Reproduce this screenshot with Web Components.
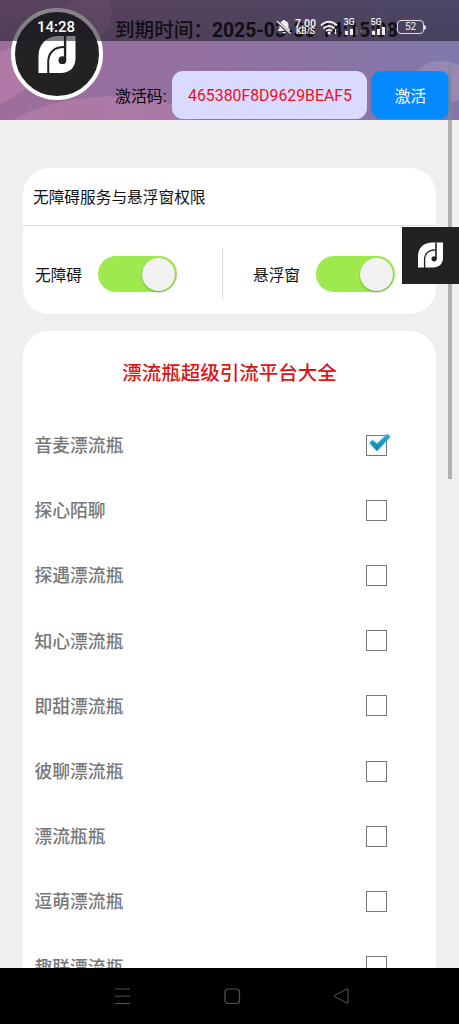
<!DOCTYPE html>
<html lang="zh"><head><meta charset="utf-8"><title>漂流瓶</title>
<style>html,body{margin:0;height:100%;overflow:hidden;background:#efefef}</style></head>
<body><bottle-app></bottle-app>
<script>
const define=(name,html)=>customElements.define(name,class extends HTMLElement{
  constructor(){super();const t=document.createElement('template');t.innerHTML=html;this.attachShadow({mode:'open'}).append(t.content.cloneNode(true));}
});
define('brand-logo',`<style>:host{display:block}svg{display:block;width:100%;height:100%}</style>
<svg viewBox="0 0 110 110"><path d="M0 110V60C0 22 27 0 62 0H110V66C110 94 92 110 66 110Z" fill="#fff"/><g fill="none" stroke="#222"><path d="M29 112V76C29 49 47 33 76 33" stroke-width="6"/><path d="M79 0V72" stroke-width="7"/></g><circle cx="71" cy="72" r="11.5" fill="#222"/></svg>`);
define('status-bar',`<style>:host{display:block;height:41px;background:linear-gradient(#1b1a2485,#1b1a2492);color:#fff;font-family:Roboto,"Liberation Sans",sans-serif;overflow:hidden}
.row{display:flex;height:54px;align-items:center;padding-left:37px}.time{font-size:15px;font-weight:500;width:238.5px;white-space:nowrap;line-height:20px}.i{color:#eee;display:flex;align-items:center}
.speed{width:24px;margin-left:2px;text-align:center;font-weight:700;font-size:10.5px;line-height:9px;white-space:nowrap}.speed small{display:block;font-size:8.5px;line-height:7px}
.sig{font-size:9px;line-height:7px;font-weight:500;height:17px;width:18px}.sig svg{display:block}
.bat{box-sizing:border-box;width:27px;height:14px;border:1px solid #ddd;border-radius:4px;font-size:10px;line-height:12px;text-align:center}.nub{width:2px;height:5px;background:#ddd;border-radius:0 2px 2px 0}</style>
<div class="row"><span class="time">14:28</span><div class="i">
<svg width="16" height="16" viewBox="0 0 16 16"><path d="M2 12V11L3.5 9V6C3.5 3.5 5 2.2 7 1.7V1h2v.7c2 .5 3.5 1.8 3.5 4.3v3L14 11v1ZM6 13h4q-2 3-4 0" fill="#eee"/><path d="M1 2.2L14 15" stroke="#453e50" stroke-width="3"/><path d="M1 2L14.5 14.5" stroke="#eee" stroke-width="1.3"/></svg>
<div class="speed">7.00<small>KB/S</small></div>
<svg style="margin-left:2px" width="19" height="15" viewBox="0 0 19 15"><g fill="none" stroke="#eee" stroke-width="2"><path d="M1 5.5Q9 -2 17 5.5M3.5 8.5Q9 3.5 14.5 8.5M6 11Q9 8.5 12 11"/></g><circle cx="9" cy="13" r="1.5" fill="#eee"/><path d="M15.5 9v5M14 12.5l1.5 1.5 1.5-1.5" stroke="#eee" fill="none"/></svg>
<div class="sig" style="margin-left:5px;width:27px">3G<svg width="22" height="10"><path d="M1 5h3v4H1zM6 3h3v6H6z" fill="#eee"/><path d="M11 1h3v8h-3zM16 0h3v9h-3z" fill="#fff" opacity=".13"/></svg></div>
<div class="sig" style="width:26.5px">5G<svg width="22" height="10"><path d="M1 5h3v4H1zM6 3h3v6H6zM11 1h3v8h-3z" fill="#eee"/><path d="M16 0h3v9h-3z" fill="#fff" opacity=".15"/></svg></div>
<div class="bat">52</div><div class="nub"></div></div></div>`);
define('user-avatar',`<style>:host{display:block;box-sizing:border-box;width:92px;height:92px;border:4px solid #fff;border-radius:50%;background:#222;padding:24px 23px}brand-logo{width:38px;height:37px}</style><brand-logo></brand-logo>`);
define('app-header',`<style>:host{display:block;height:119.5px;position:relative;overflow:hidden;font-family:Roboto,"Noto Sans CJK SC",sans-serif;color:#050208}
.bg{position:absolute;inset:0}.content{position:relative;display:flex;padding:8px 0 0 11px}.info{width:348px;margin-left:12px}
.expire{height:44px;line-height:46px;font-size:19.6px;font-weight:500;white-space:nowrap;display:flex;color:#000}.expire b{font-weight:700;font-size:19.3px;margin-left:-1px}
.code{display:flex;align-items:center;height:48px;margin-top:19px}.code label{width:57px;font-size:15.9px;white-space:nowrap;padding-top:1px}
.field{position:relative;box-sizing:border-box;width:195px;height:48px;border-radius:11px;background:#dadaff;color:#f00f24;font-size:15.85px;line-height:49px;padding:0 15px}.field div{overflow:hidden;display:flex;justify-content:flex-end;white-space:nowrap}
button{border:0;border-radius:11px;height:48px;width:79px;margin-left:4px;background:#0589ff;color:#fff;font:15.7px "Noto Sans CJK SC",sans-serif;padding:0}</style>
<svg class="bg" width="459" height="120"><defs><linearGradient id="g"><stop stop-color="#9d6e9b"/><stop offset=".45" stop-color="#9271a1"/><stop offset="1" stop-color="#8178ab"/></linearGradient></defs><path d="M0 0H459V120H0z" fill="url(#g)"/><path d="M0 52C30 42 45 22 70 5L75 0H108C118 22 105 40 77 47C50 61 33 90 0 104Z" fill="#c485b0" opacity=".48"/><path d="M13 120C45 101 92 94 144 97C166 99 183 107 195 120Z" fill="#c084ae" opacity=".5"/><path d="M415 75C423 61 440 57 459 65V100C430 112 407 93 415 75Z" fill="#aa96bd" opacity=".55"/></svg>
<div class="content"><user-avatar></user-avatar><div class="info"><div class="expire">到期时间：<b>2025-03-30 14:15:08</b></div><div class="code"><label>激活码:</label><div class="field"><div><span>3465380F8D9629BEAF5</span></div></div><button>激活</button></div></div></div>`);
define('ui-card',`<style>:host{display:block;box-sizing:border-box;margin:0 23px;background:#fff;border-radius:26px;width:413px}</style><slot></slot>`);
define('ui-switch',`<style>:host{display:block;box-sizing:border-box;width:79px;height:36px;padding:2px 1px 0 44px;border-radius:18px;background:#9ee94d}i{display:block;width:33px;height:33px;border-radius:50%;background:#f2f2f2;box-shadow:0 1px 2px #4b7d2599}</style><i></i>`);
define('permission-panel',`<style>:host{display:block;height:146px;color:#111;font:15.7px "Noto Sans CJK SC",sans-serif}.title{height:57px;line-height:57px;padding-left:10px;border-bottom:1px solid #ddd}.controls{display:flex;height:88px;align-items:center;padding:0 0 1px 12px}.line{width:1px;height:50px;background:#d9d9d9;margin:10px 30px 2px 45px}.controls ui-switch{margin-top:7px}.controls span{width:63px;margin-top:9px}</style>
<div class="title">无障碍服务与悬浮窗权限</div><div class="controls"><span>无障碍</span><ui-switch></ui-switch><div class="line"></div><span>悬浮窗</span><ui-switch></ui-switch></div>`);
define('platform-row',`<style>:host{display:flex;height:65.2px;align-items:center;justify-content:space-between;padding:0 49px 0 11.5px;color:#777;font:500 17.8px "Noto Sans CJK SC",sans-serif}.name{margin-top:-2px}.box{box-sizing:border-box;width:21px;height:21px;border:1px solid #777;position:relative}svg{display:none;position:absolute;left:1px;top:-3px;filter:drop-shadow(0 0 1.5px #6ce)}:host([checked]) svg{display:block}</style><span class="name"><slot></slot></span><div class="box"><svg width="24" height="20" viewBox="0 0 24 20"><defs><linearGradient id="c" x2="0" y2="1"><stop stop-color="#39acd1"/><stop offset="1" stop-color="#157fa9"/></linearGradient></defs><path d="M1.5 10L4.5 7L9 11L19 1L22.5 3.5L9 18Z" fill="url(#c)"/></svg></div>`);
define('platform-list',`<style>:host{display:block}h2{margin:0;height:81.5px;text-align:center;color:#dc1414;font:500 19.5px/82px "Noto Sans CJK SC",sans-serif}</style><h2>漂流瓶超级引流平台大全</h2><platform-row checked>音麦漂流瓶</platform-row><platform-row>探心陌聊</platform-row><platform-row>探遇漂流瓶</platform-row><platform-row>知心漂流瓶</platform-row><platform-row>即甜漂流瓶</platform-row><platform-row>彼聊漂流瓶</platform-row><platform-row>漂流瓶瓶</platform-row><platform-row>逗萌漂流瓶</platform-row><platform-row>趣联漂流瓶</platform-row>`);
define('nav-bar',`<style>:host{display:flex;box-sizing:border-box;height:56px;background:#000;padding:20px 109px 0 114px;justify-content:space-between}</style>
<svg width="17" height="17"><path d="M1 1H16M1 8.2H16M1 15.5H16" stroke="#555"/></svg><svg width="17" height="17"><rect x="1" y="1" width="14.5" height="14.5" rx="3" fill="none" stroke="#555" stroke-width="1.2"/></svg><svg width="17" height="17"><path d="M15 1.2V14.8L14 15 1.5 8.6V7.4L14 1Z" fill="none" stroke="#555" stroke-linejoin="round"/></svg>`);
define('bottle-app',`<style>:host{display:flex;flex-direction:column;width:459px;height:1024px;position:relative;overflow:hidden;background:#efefef}main{height:848.5px;flex:none;overflow:hidden}.perm{margin-top:48.5px}.list{margin-top:17px;height:720px}status-bar{position:absolute;z-index:4;left:0;right:0;top:0}.scroll{position:absolute;left:448px;top:66px;width:4px;height:413px;background:#8888889c}.float{position:absolute;left:402px;top:227px;width:57px;height:57px;box-sizing:border-box;background:#222;padding:15px 16px}.float brand-logo{width:25px;height:26px}</style>
<app-header></app-header><main><ui-card class="perm"><permission-panel></permission-panel></ui-card><ui-card class="list"><platform-list></platform-list></ui-card></main><nav-bar></nav-bar><div class="scroll"></div><div class="float"><brand-logo></brand-logo></div><status-bar></status-bar>`);
</script></body></html>
